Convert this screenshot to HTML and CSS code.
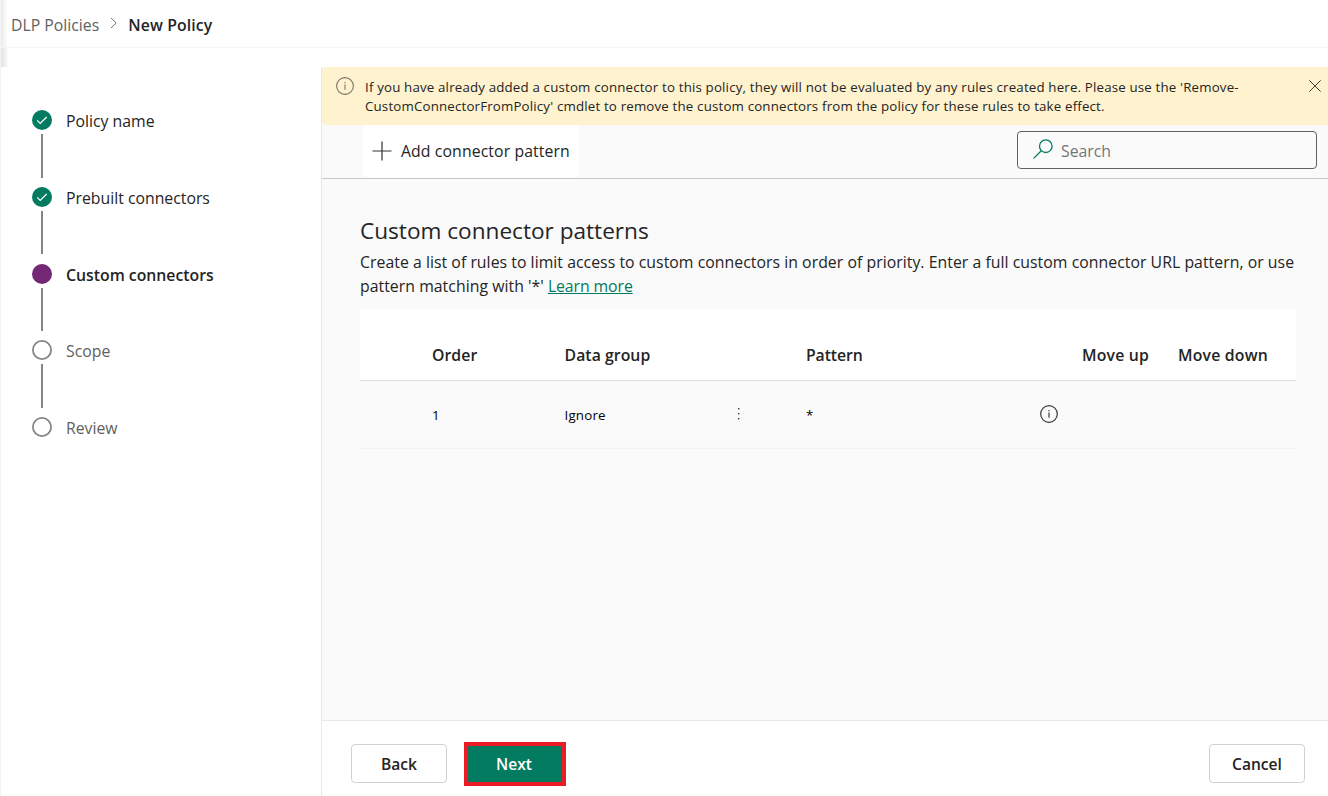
FILE: index.html
```html
<!DOCTYPE html>
<html lang="en">
<head>
<meta charset="utf-8">
<title>New Policy</title>
<link rel="stylesheet" href="styles.css">
</head>
<body>
<div class="app">
  <header class="topbar">
    <nav class="crumbs">
      <span class="crumb">DLP Policies</span>
      <svg class="chevron" width="8" height="12" viewBox="0 0 8 12"><path d="M1 1l5.2 5L1 11" fill="none" stroke="#757575"/></svg>
      <span class="crumb-current">New Policy</span>
    </nav>
    <div class="topbar-shade"></div>
  </header>
  <div class="body">
    <aside class="sidebar">
      <ol class="steps">
        <li class="step">
          <span class="rail"><svg class="dot" width="20" height="20" viewBox="0 0 20 20"><circle cx="10" cy="10" r="10" fill="#037b60"/><path d="M5.2 10.4l3 3L14.7 7" fill="none" stroke="#fff" stroke-width="1.2"/></svg><i class="line"></i></span>
          <span class="label">Policy name</span>
        </li>
        <li class="step">
          <span class="rail"><svg class="dot" width="20" height="20" viewBox="0 0 20 20"><circle cx="10" cy="10" r="10" fill="#037b60"/><path d="M5.2 10.4l3 3L14.7 7" fill="none" stroke="#fff" stroke-width="1.2"/></svg><i class="line"></i></span>
          <span class="label">Prebuilt connectors</span>
        </li>
        <li class="step current">
          <span class="rail"><svg class="dot" width="20" height="20" viewBox="0 0 20 20"><circle cx="10" cy="10" r="10" fill="#742774"/></svg><i class="line"></i></span>
          <span class="label">Custom connectors</span>
        </li>
        <li class="step todo">
          <span class="rail"><svg class="dot" width="20" height="20" viewBox="0 0 20 20"><circle cx="10" cy="10" r="9.1" fill="#fff" stroke="#858585" stroke-width="1.8"/></svg><i class="line"></i></span>
          <span class="label">Scope</span>
        </li>
        <li class="step todo">
          <span class="rail"><svg class="dot" width="20" height="20" viewBox="0 0 20 20"><circle cx="10" cy="10" r="9.1" fill="#fff" stroke="#858585" stroke-width="1.8"/></svg></span>
          <span class="label">Review</span>
        </li>
      </ol>
    </aside>
    <main class="main">
      <div class="banner">
        <svg class="info" width="18" height="18" viewBox="0 0 18 18"><circle cx="9" cy="9" r="8.4" fill="none" stroke="#797567" stroke-width="1.1"/><path d="M9 7.5v5.3M9 5v1.3" stroke="#797567" stroke-width="1.1"/></svg>
        <p class="banner-text">If you have already added a custom connector to this policy, they will not be evaluated by any rules created here. Please use the 'Remove-<br>CustomConnectorFromPolicy' cmdlet to remove the custom connectors from the policy for these rules to take effect.</p>
        <svg class="close" width="12" height="12" viewBox="0 0 12 12"><path d="M.3.3l11.4 11.4M11.7.3L.3 11.7" stroke="#45423a" stroke-width="1"/></svg>
      </div>
      <div class="toolbar">
        <button class="add"><svg width="20" height="20" viewBox="0 0 20 20"><path d="M10 .5v19M.5 10h19" stroke="#323130" stroke-width="1.2"/></svg><span class="add-text">Add connector pattern</span></button>
        <div class="search"><svg width="20" height="20" viewBox="0 0 20 20"><circle cx="12.8" cy="7.2" r="6.3" fill="none" stroke="#037b60" stroke-width="1.3"/><path d="M8.3 11.7L.6 19.4" stroke="#037b60" stroke-width="1.3"/></svg><span class="search-text">Search</span></div>
      </div>
      <section class="content">
        <h1 class="title">Custom connector patterns</h1>
        <p class="desc">Create a list of rules to limit access to custom connectors in order of priority. Enter a full custom connector URL pattern, or use<br>pattern matching with '*' <a class="more">Learn more</a></p>
        <div class="table">
          <div class="row head"><b>Order</b><b>Data group</b><span></span><b class="pattern">Pattern</b><span></span><b class="move">Move up</b><b class="move">Move down</b></div>
          <div class="row item"><span>1</span><span class="group">Ignore</span><svg class="dots" width="4" height="14" viewBox="0 0 4 14"><g fill="#3b3a39"><rect x="1" y="1" width="1.4" height="1.4"/><rect x="1" y="6" width="1.4" height="1.4"/><rect x="1" y="11" width="1.4" height="1.4"/></g></svg><span>*</span><svg class="row-info" width="18" height="18" viewBox="0 0 18 18"><circle cx="9" cy="9" r="8.3" fill="none" stroke="#3b3a39" stroke-width="1.2"/><path d="M9 7.5v5.3M9 5v1.3" stroke="#3b3a39" stroke-width="1.2"/></svg></div>
        </div>
      </section>
      <footer class="footer">
        <button class="btn">Back</button>
        <button class="btn primary">Next</button>
        <button class="btn cancel">Cancel</button>
      </footer>
    </main>
  </div>
</div>
</body>
</html>
```
FILE: styles.css
```css
* { box-sizing: border-box; }
body { margin: 0; font-family: "Open Sans", "Noto Sans", sans-serif; font-size: 15.8px; color: #242424; background: #fff; }
button { font: inherit; color: inherit; margin: 0; }
.app { display: flex; flex-direction: column; width: 1328px; height: 796px; overflow: hidden; border-left: 1px solid #f3f3f3; }
.topbar { display: flex; flex-direction: column; height: 67px; flex: none; }
.crumbs { display: flex; align-items: center; height: 47px; padding: 2px 0 0 10px; background: linear-gradient(90deg, #ebebeb, #fff 7px); }
.topbar-shade { flex: 1; border-top: 1px solid #f5f5f5; background: linear-gradient(90deg, #e2e2e2, #fff 8px); }
.crumb { color: #616161; }
.chevron { margin: -4px 10px 0 11px; }
.crumb-current { font-weight: 600; letter-spacing: .12px; }
.body { display: flex; flex: 1; min-height: 0; }
.sidebar { width: 321px; flex: none; border-right: 1px solid #e8e8e8; background: #fff; }
.steps { list-style: none; margin: 0; padding: 43px 0 0 31px; }
.step { display: flex; height: 76.75px; gap: 14px; }
.rail { display: flex; flex-direction: column; align-items: center; width: 20px; }
.dot { flex: none; }
.line { width: 2px; height: 43.5px; margin-top: 4px; background: #858585; }
.label { line-height: 22px; }
.current .label { font-weight: 600; }
.todo .label { color: #616161; }
.main { flex: 1; min-width: 0; display: flex; flex-direction: column; background: #fafafa; }
.banner { display: flex; height: 58px; flex: none; background: #fff2ce; border-radius: 4px 0 0 4px; padding: 10px 7px 0 14px; }
.info { flex: none; }
.banner-text { margin: 1px 0 0 11px; flex: 1; font-size: 13.3px; letter-spacing: .17px; line-height: 19px; white-space: nowrap; }
.close { flex: none; margin-top: 3px; }
.toolbar { display: flex; justify-content: space-between; height: 54px; flex: none; border-bottom: 1px solid #c8c8c8; padding-left: 41px; }
.add { display: flex; align-items: center; width: 216px; height: 52px; border: 0; border-radius: 4px; background: #fff; padding: 0 0 0 9px; gap: 9px; white-space: nowrap; }
.add-text { letter-spacing: .1px; }
.search { display: flex; align-items: center; width: 300px; height: 38px; margin: 6px 11px 0 0; border: 1px solid #616161; border-radius: 4px; padding-left: 15px; gap: 8px; }
.search svg { margin-top: -3px; }
.search-text { color: #757575; padding-top: 2px; }
.content { flex: 1; min-height: 0; padding: 37px 32px 0 38px; }
.title { margin: 0; font-size: 22.6px; line-height: 30px; font-weight: 400; }
.desc { margin: 4px 0 0; line-height: 24px; letter-spacing: .04px; white-space: nowrap; }
.more { color: #037b60; text-decoration: underline; letter-spacing: -.08px; }
.table { margin-top: 11px; }
.row { display: grid; grid-template-columns: 132.5px 172.5px 69px 234px 42px 96px 1fr; align-items: center; padding-left: 72px; }
.head { height: 72px; padding-top: 20px; background: #fff; border-bottom: 1px solid #dcdcdc; }
.head b { font-weight: 600; letter-spacing: .05px; white-space: nowrap; }
.head .pattern { letter-spacing: -.1px; }
.head .move { letter-spacing: .2px; }
.item { height: 68px; border-bottom: 1px solid #f3f3f3; font-size: 13.3px; color: #000; }
.group { letter-spacing: .2px; }
.row-info, .dots { margin-top: -2px; }
.footer { display: flex; height: 76px; flex: none; background: #fff; border-top: 1px solid #e8e8e8; padding: 23px 23px 0 29px; }
.btn { width: 96px; height: 39px; border: 1px solid #d1d1d1; border-radius: 4px; background: #fff; font-size: 15.6px; font-weight: 600; padding: 0; }
.primary { width: 102px; height: 44px; margin: -2px 0 0 17px; border: 4px solid #ed1c24; border-radius: 0; background: #037b60; color: #fff; padding-right: 2px; }
.cancel { margin-left: auto; }
```
